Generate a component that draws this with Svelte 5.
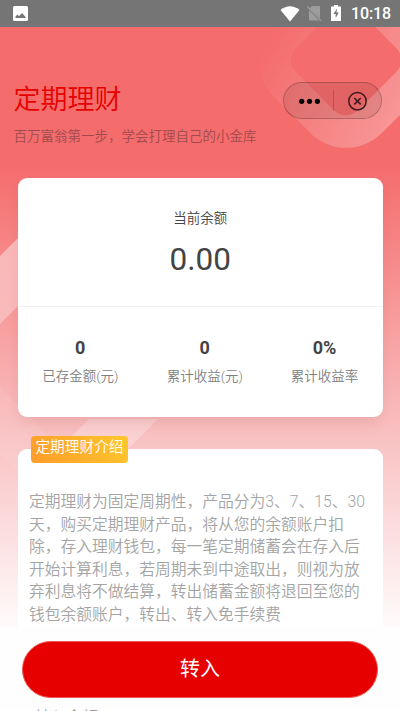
<script lang="ts">
	let balance = $state('0.00');

	const stats = [
		{ value: '0', label: '已存金额(元)' },
		{ value: '0', label: '累计收益(元)' },
		{ value: '0%', label: '累计收益率' }
	];

	const intro = [
		'定期理财为固定周期性，产品分为3、7、15、30',
		'天，购买定期理财产品，将从您的余额账户扣',
		'除，存入理财钱包，每一笔定期储蓄会在存入后',
		'开始计算利息，若周期未到中途取出，则视为放',
		'弃利息将不做结算，转出储蓄金额将退回至您的',
		'钱包余额账户，转出、转入免手续费'
	];
</script>

<div class="page">
	<svg class="bg" width="400" height="711" viewBox="0 0 400 711">
		<defs>
			<linearGradient id="ringTop" x1="0" y1="0.6" x2="1" y2="0.3">
				<stop offset="0" stop-color="#fff" stop-opacity="0" />
				<stop offset="1" stop-color="#fff" stop-opacity="0.31" />
			</linearGradient>
			<linearGradient id="ringLeft" x1="0" y1="0" x2="0" y2="1">
				<stop offset="0" stop-color="#fff" stop-opacity="0.5" />
				<stop offset="1" stop-color="#fff" stop-opacity="0.3" />
			</linearGradient>
			<mask id="hole">
				<rect x="-90" y="-90" width="180" height="180" fill="#fff" />
				<rect x="-44" y="-44" width="88" height="88" rx="17" fill="#000" />
			</mask>
		</defs>
		<g transform="translate(346 60) rotate(45)">
			<rect x="-77" y="-77" width="154" height="154" rx="51" fill="url(#ringTop)" mask="url(#hole)" />
		</g>
		<path d="M0 256 L60 196 V264 L0 324 Z" fill="url(#ringLeft)" />
		<path d="M0 387 L61 448 V515 L0 454 Z" fill="#fff" fill-opacity="0.07" />
		<path d="M158 419 H89 L40 468 H109 Z" fill="#fff" fill-opacity="0.25" />
	</svg>

	<div class="status">
		<svg class="photo" width="15" height="15" viewBox="0 0 15 15">
			<rect width="15" height="15" rx="1.5" fill="#fff" />
			<path d="M2.5 12 V10.5 L4.5 8.5 L6 10.3 L9 7 L12.5 11 V12 Z" fill="#757575" />
		</svg>
		<svg width="20" height="16" viewBox="0 0 20 16">
			<path d="M0.5 4 Q10 -3.5 19.5 4 L10 15.5 Z" fill="#fff" />
		</svg>
		<svg class="sim" width="15" height="17" viewBox="0 0 15 17">
			<path d="M5 1 H12 Q13 1 13 2 V13 L2.5 3.5 Z M2 5 L12 15.5 H3 Q2 15.5 2 14.5 Z" fill="#9d9d9d" />
			<path d="M0.5 1.5 L14.3 16" stroke="#9d9d9d" stroke-width="1.2" />
		</svg>
		<svg class="battery" width="10" height="16" viewBox="0 0 10 16">
			<path d="M3 0 H7 V1.5 H10 V16 H0 V1.5 H3 Z" fill="#fff" />
			<path d="M6 3.5 L2.5 9 H4.7 V13 L7.8 7.5 H5.5 Z" fill="#757575" />
		</svg>
		<span class="clock">10:18</span>
	</div>

	<header>
		<div>
			<h1>定期理财</h1>
			<p>百万富翁第一步，学会打理自己的小金库</p>
		</div>
		<div class="capsule">
			<svg width="99" height="37" viewBox="0 0 99 37">
				<circle cx="18.7" cy="19.3" r="2.6" />
				<circle cx="26.5" cy="19.3" r="2.6" />
				<circle cx="34.4" cy="19.3" r="2.6" />
				<path d="M50.5 8 V29" stroke="#000" stroke-opacity="0.18" />
				<circle cx="74.5" cy="19.2" r="8.7" fill="none" stroke="#40191c" stroke-width="1.5" />
				<path d="M71.3 16 L77.7 22.4 M77.7 16 L71.3 22.4" stroke="#40191c" stroke-width="1.7" />
			</svg>
		</div>
	</header>

	<section class="account">
		<div class="balance">
			<span>当前余额</span>
			<strong>{balance}</strong>
		</div>
		<div class="stats">
			{#each stats as stat}
				<div class="stat">
					<b>{stat.value}</b>
					<span>{stat.label}</span>
				</div>
			{/each}
		</div>
	</section>

	<section class="intro">
		<h2>定期理财介绍</h2>
		<p>
			{#each intro as line}
				<span>{line}</span>
			{/each}
		</p>
		<div class="next">可转入余额</div>
	</section>

	<div class="bottom">
		<button>转入</button>
	</div>
</div>

<style>
	:global(body) {
		margin: 0;
	}

	.page {
		position: relative;
		width: 400px;
		height: 711px;
		overflow: hidden;
		font-family: Roboto, 'Noto Sans CJK SC', sans-serif;
		font-weight: 350;
		background: linear-gradient(#f56c6c 0, #f56c6c 165px, #f9c2c3 440px, #fff 640px);
	}

	.bg {
		position: absolute;
		top: 0;
		left: 0;
	}

	.status {
		position: relative;
		display: flex;
		align-items: center;
		height: 27px;
		box-sizing: border-box;
		padding: 0 9px 0 13px;
		background: #757575;
	}

	.photo {
		margin-right: auto;
	}

	.sim {
		margin-left: 7px;
	}

	.battery {
		margin: -2px 10px 0 9px;
	}

	.clock {
		color: #fff;
		font-size: 16px;
		font-weight: 500;
		line-height: 27px;
		letter-spacing: -0.1px;
	}

	header {
		position: relative;
		display: flex;
		justify-content: space-between;
		height: 151px;
		box-sizing: border-box;
		padding: 51px 18px 0 13.5px;
	}

	h1 {
		margin: 2px 0 0;
		font-size: 27px;
		line-height: 40px;
		font-weight: 350;
		color: #e60000;
	}

	header p {
		margin: 6px 0 0;
		font-size: 13.5px;
		line-height: 20px;
		color: #a04a4e;
		white-space: nowrap;
	}

	.capsule {
		width: 99px;
		height: 37px;
		margin: 4px 0 0 -20px;
		box-sizing: border-box;
		border: 1px solid rgba(0, 0, 0, 0.22);
		border-radius: 19px;
		background: rgba(0, 0, 0, 0.08);
	}

	.capsule svg {
		display: block;
		margin: -1px;
	}

	.account {
		position: relative;
		width: 364.5px;
		height: 239px;
		margin-left: 18px;
		border-radius: 9px;
		background: #fff;
		box-shadow: 0 8px 14px -3px rgba(120, 40, 40, 0.12);
	}

	.balance {
		display: flex;
		flex-direction: column;
		align-items: center;
		height: 129px;
		box-sizing: border-box;
		padding-top: 30px;
		border-bottom: 1px solid #f2f2f2;
		font-size: 13.5px;
		line-height: 20px;
		color: #444;
	}

	.balance strong {
		margin-top: 12px;
		font-size: 31.5px;
		line-height: 40px;
		font-weight: 400;
		color: #444;
	}

	.stats {
		display: flex;
		padding-top: 31px;
	}

	.stat {
		display: flex;
		flex-direction: column;
		align-items: center;
		width: 124.5px;
		font-size: 13.5px;
		line-height: 20px;
		color: #808080;
	}

	.stat:last-child {
		width: 115px;
	}

	.stat b {
		margin-bottom: 8px;
		font-size: 18px;
		font-weight: 700;
		color: #444;
	}

	.intro {
		position: relative;
		width: 364.5px;
		height: 300px;
		margin: 32px 0 0 18px;
		border-radius: 9px;
		background: #fff;
	}

	h2 {
		position: absolute;
		top: -13.5px;
		left: 13px;
		width: 97px;
		height: 27px;
		margin: 0;
		border-radius: 4px;
		background: linear-gradient(60deg, #ff9c2a, #ffc72c);
		color: #fff;
		font-size: 14.7px;
		line-height: 23px;
		font-weight: 350;
		text-align: center;
	}

	.intro p {
		margin: 0;
		padding: 42px 0 0 11px;
		font-size: 15.75px;
		line-height: 22.5px;
		color: #a4a4a4;
		white-space: nowrap;
	}

	.intro p span {
		display: block;
	}

	.next {
		margin-top: 81px;
		padding-left: 1px;
		font-size: 15.75px;
		line-height: 22px;
		color: #999;
	}

	.bottom {
		position: absolute;
		left: 0;
		top: 627px;
		width: 400px;
		height: 82px;
		box-sizing: border-box;
		padding: 14px 22px 0;
		background: #fefefe;
	}

	button {
		display: block;
		width: 356px;
		height: 57px;
		padding: 0 0 4px;
		border: 1px solid #ee5555;
		border-radius: 29px;
		background: #e60000;
		color: #fff;
		font-family: inherit;
		font-size: 20px;
		font-weight: 400;
	}
</style>
